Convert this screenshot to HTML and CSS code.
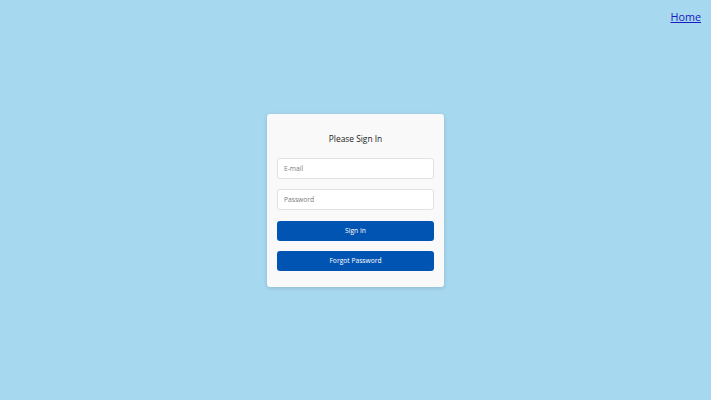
FILE: index.html
```html
<!DOCTYPE html>
<html lang="en">
<head>
<meta charset="utf-8">
<title>Please Sign In</title>
<link rel="stylesheet" href="styles.css">
</head>
<body>
<header class="topbar">
  <a class="home-link" href="#">Home</a>
</header>
<main class="stage">
  <form class="card">
    <h1 class="title">Please Sign In</h1>
    <input class="field" type="email" placeholder="E-mail">
    <input class="field" type="password" placeholder="Password">
    <button class="btn" type="button">Sign In</button>
    <button class="btn" type="button">Forgot Password</button>
  </form>
</main>
</body>
</html>
```
FILE: styles.css
```css
html, body {
  margin: 0;
  height: 100%;
}
body {
  background: #a6d8f0;
  font-family: "Open Sans", "Noto Sans", sans-serif;
  position: relative;
}
.topbar {
  position: absolute;
  top: 0;
  right: 10px;
  padding-top: 4px;
}
.home-link {
  color: #1a1ac0;
  font-size: 10.8px;
  text-decoration: underline;
}
.stage {
  height: 100%;
  display: flex;
  align-items: center;
  justify-content: center;
}
.card {
  width: 177px;
  box-sizing: border-box;
  background: #f9f9f9;
  border-radius: 3px;
  box-shadow: 0 1px 4px rgba(0, 0, 0, 0.15);
  padding: 16px 10px 16px;
  display: flex;
  flex-direction: column;
  gap: 11px;
}
.title {
  margin: 0;
  font-size: 8.4px;
  font-weight: 400;
  line-height: 17px;
  color: #1a1a1a;
  text-align: center;
}
.field {
  height: 21px;
  box-sizing: border-box;
  margin: 0;
  border: 1px solid #e2e2e2;
  border-radius: 3px;
  background: #fff;
  padding: 0 6px;
  font-family: inherit;
  font-size: 6.7px;
  color: #333;
  outline: none;
}
.field::placeholder {
  color: #7a7a7a;
}
.btn {
  height: 20px;
  margin: 0;
  border: none;
  border-radius: 3px;
  background: #0254b3;
  color: #fff;
  font-family: inherit;
  font-size: 6.7px;
  cursor: pointer;
}
.field + .field {
  margin-top: -1px;
}
.btn + .btn {
  margin-top: -1px;
}
```
